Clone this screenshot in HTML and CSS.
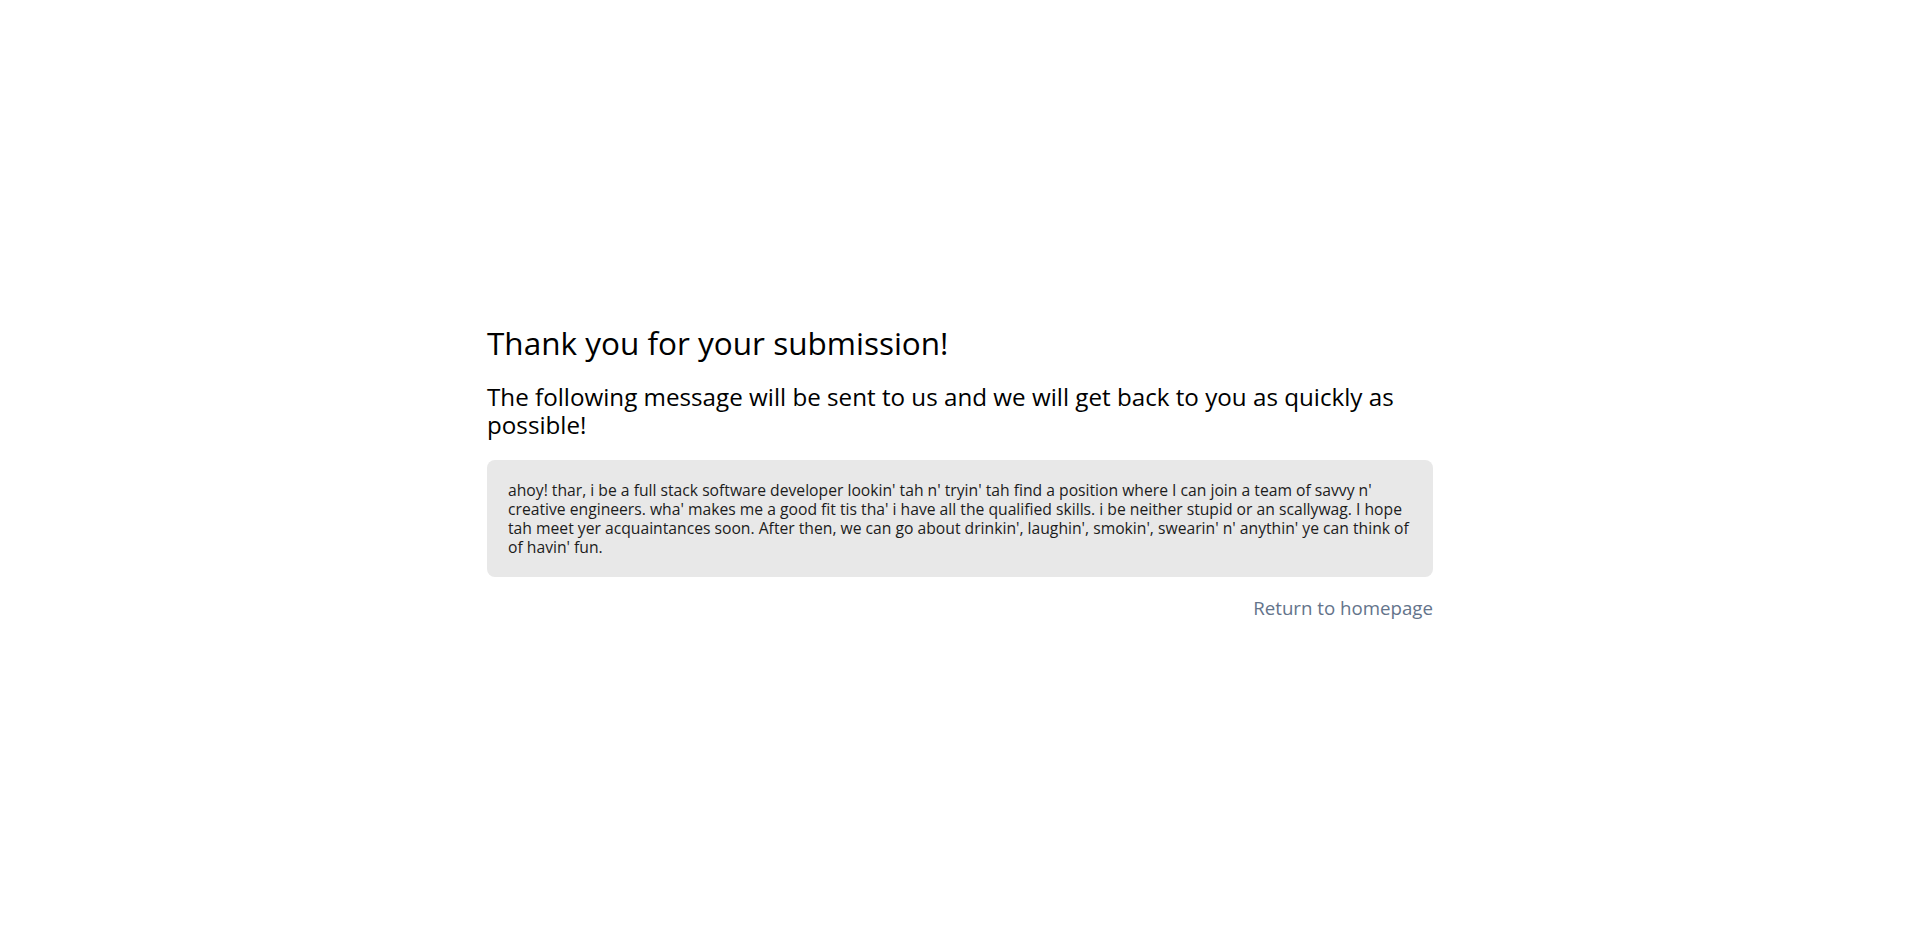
FILE: index.html
```html
<!DOCTYPE html>
<html lang="en">
<head>
<meta charset="utf-8">
<title>Thank you</title>
<link rel="stylesheet" href="styles.css">
</head>
<body>
<main class="page">
  <section class="thanks">
    <h1 class="thanks-title">Thank you for your submission!</h1>
    <h2 class="thanks-subtitle">The following message will be sent to us and we will get back to you as quickly as possible!</h2>
    <div class="message">ahoy! thar, i be a full stack software developer lookin' tah n' tryin' tah find a position where I can join a team of savvy n' creative engineers. wha' makes me a good fit tis tha' i have all the qualified skills. i be neither stupid or an scallywag. I hope tah meet yer acquaintances soon. After then, we can go about drinkin', laughin', smokin', swearin' n' anythin' ye can think of of havin' fun.</div>
    <div class="actions">
      <a class="home-link" href="#">Return to homepage</a>
    </div>
  </section>
</main>
</body>
</html>
```
FILE: styles.css
```css
html, body {
  margin: 0;
  padding: 0;
  background: #ffffff;
}

body {
  font-family: "Open Sans", "Noto Sans", sans-serif;
  color: #000;
}

.page {
  padding-top: 324px;
}

.thanks {
  width: 946px;
  margin: 0 auto;
  display: flex;
  flex-direction: column;
}

.thanks-title {
  margin: 0;
  font-size: 31.5px;
  line-height: 38px;
  font-weight: 400;
  color: #000;
}

.thanks-subtitle {
  margin: 21px 0 0;
  font-size: 24.2px;
  line-height: 28px;
  font-weight: 400;
  color: #000;
}

.message {
  margin-top: 21px;
  background: #e8e8e8;
  border-radius: 8px;
  padding: 21px 21px 20px;
  font-size: 15.7px;
  line-height: 19px;
  color: #1c1c1c;
}

.actions {
  margin-top: 20px;
  display: flex;
  justify-content: flex-end;
}

.home-link {
  font-size: 18.7px;
  line-height: 22px;
  color: #64748b;
  text-decoration: none;
}
```
